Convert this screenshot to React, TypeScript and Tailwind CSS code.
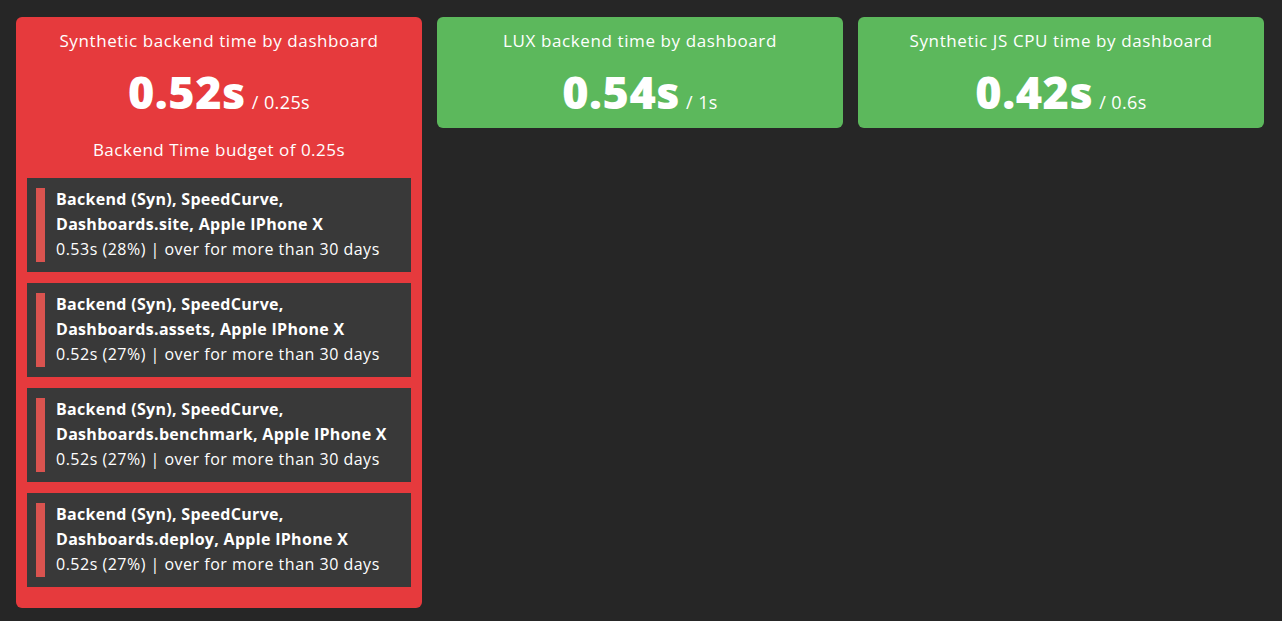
const font = "font-['Open_Sans','Noto_Sans',sans-serif]";

interface Alert {
  name: string;
  detail: string;
}

const alerts: Alert[] = [
  { name: "Backend (Syn), SpeedCurve, Dashboards.site, Apple IPhone X", detail: "0.53s (28%) | over for more than 30 days" },
  { name: "Backend (Syn), SpeedCurve, Dashboards.assets, Apple IPhone X", detail: "0.52s (27%) | over for more than 30 days" },
  { name: "Backend (Syn), SpeedCurve, Dashboards.benchmark, Apple IPhone X", detail: "0.52s (27%) | over for more than 30 days" },
  { name: "Backend (Syn), SpeedCurve, Dashboards.deploy, Apple IPhone X", detail: "0.52s (27%) | over for more than 30 days" },
];

function Value({ value, budget }: { value: string; budget: string }) {
  return (
    <div className="mt-[12px] flex items-baseline justify-center">
      <span className="text-[45px] font-extrabold leading-[52px] tracking-[0.5px]">{value}</span>
      <span className="ml-[6px] text-[18px] tracking-[0.4px]">/ {budget}</span>
    </div>
  );
}

function Card({ title, value, budget, green }: { title: string; value: string; budget: string; green?: boolean }) {
  return (
    <div className={`w-[406px] rounded-[6px] ${green ? "bg-[#5cb85c] pb-[10px]" : "bg-[#e63a3d] pb-[21px]"} px-[11px] pt-[11px] text-white`}>
      <div className="text-center text-[17px] leading-[26px] tracking-[0.6px]">{title}</div>
      <Value value={value} budget={budget} />
      {!green ? (
        <>
          <div className="mt-[19px] text-center text-[17px] leading-[26px] tracking-[0.5px]">Backend Time budget of {budget}</div>
          <div className="mt-[15px] flex flex-col gap-[11px]">
            {alerts.map((a) => (
              <div key={a.name} className="flex h-[94px] bg-[#393939] px-[9px] py-[10px]">
                <div className="w-[9px] shrink-0 bg-[#d9534f]" />
                <div className="ml-[11px] pr-[10px] text-[16px] leading-[25px] -mt-[1px]">
                  <div className="font-bold tracking-[0.3px]">{a.name}</div>
                  <div className="tracking-[0.5px]">{a.detail}</div>
                </div>
              </div>
            ))}
          </div>
        </>
      ) : null}
    </div>
  );
}

export default function App() {
  return (
    <div className={`min-h-[621px] bg-[#262626] ${font}`}>
      <div className="flex items-start gap-[15px] pl-[16px] pt-[17px]">
        <Card title="Synthetic backend time by dashboard" value="0.52s" budget="0.25s" />
        <Card title="LUX backend time by dashboard" value="0.54s" budget="1s" green />
        <Card title="Synthetic JS CPU time by dashboard" value="0.42s" budget="0.6s" green />
      </div>
    </div>
  );
}
